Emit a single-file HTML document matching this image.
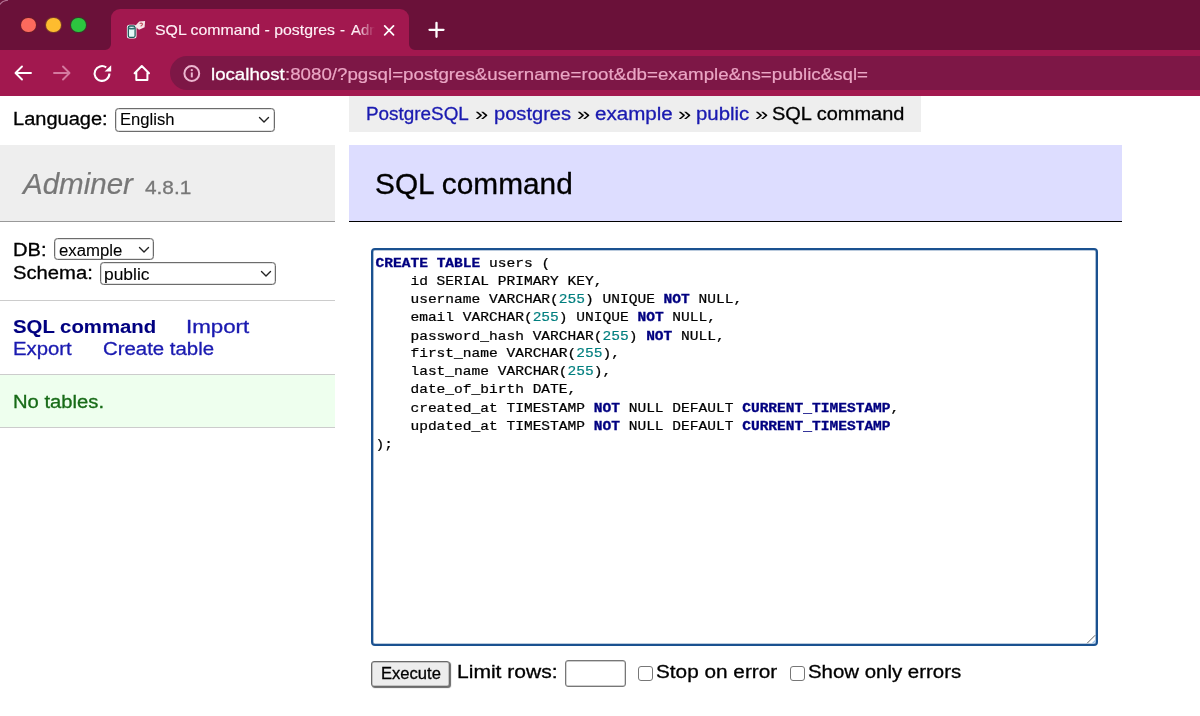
<!DOCTYPE html>
<html><head><meta charset="utf-8"><style>
html,body{margin:0;padding:0;}
body{width:1200px;height:716px;overflow:hidden;position:relative;background:#fff;font-family:"Liberation Sans",sans-serif;}
.abs{position:absolute;}
.t{position:absolute;white-space:pre;line-height:0;transform-origin:0 0;}
#tabstrip{left:0;top:0;width:1200px;height:50px;background:#6a1139;}
#toolbar{left:0;top:50px;width:1200px;height:46px;background:#a2184f;}
#tab{}
.light{position:absolute;width:14.5px;height:14.5px;border-radius:50%;top:17.8px;}
#activetab{left:111px;top:9px;width:298px;height:41px;background:#a2184f;border-radius:9px 9px 0 0;}
#pill{left:170px;top:56px;width:1100px;height:34px;background:#7d1746;border-radius:17px;}
.sel{position:absolute;box-sizing:border-box;border:1px solid #6c6c6c;border-radius:3.5px;background:#fff;box-shadow:inset 0 0 0 0.3px #888;}
pre#code{position:absolute;margin:0;font:14.55px/19.868px "Liberation Mono",monospace;color:#000;white-space:pre;transform:scaleY(0.91);transform-origin:0 0;-webkit-text-stroke:0.25px #000;}
pre#code b{-webkit-text-stroke:0.35px #000080;} pre#code i{-webkit-text-stroke:0.2px #007f7f;}
pre#code b{color:#000080;font-weight:bold;}
pre#code i{color:#007f7f;font-style:normal;}
</style></head><body>
<div id="tabstrip" class="abs"></div>
<svg class="abs" style="left:0;top:0" width="10" height="6"><path d="M0 4.5 Q2 0.8 8 0.2" fill="none" stroke="#b07090" stroke-width="1.2"/></svg>
<div id="toolbar" class="abs"></div>
<div id="activetab" class="abs"></div>
<!-- inverse corners -->
<svg class="abs" style="left:105px;top:44px" width="6" height="6"><path d="M6 0 L6 6 L0 6 A6 6 0 0 0 6 0Z" fill="#a2184f"/></svg>
<svg class="abs" style="left:409px;top:44px" width="6" height="6"><path d="M0 0 L0 6 L6 6 A6 6 0 0 1 0 0Z" fill="#a2184f"/></svg>
<div class="light" style="left:21.2px;background:#fc6a5d;box-shadow:0 0 0 1px #6a1a2a"></div>
<div class="light" style="left:46.2px;background:#fdbc2f;box-shadow:0 0 0 1px #7a3a2a"></div>
<div class="light" style="left:71.2px;background:#2cc53f;box-shadow:0 0 0 1px #3a3a2a"></div>
<!-- favicon -->
<svg class="abs" style="left:125px;top:19px" width="22" height="22" viewBox="0 0 22 22">
 <rect x="1.9" y="5.8" width="9.6" height="13.7" rx="2.5" fill="#fff"/>
 <rect x="3.3" y="7" width="6.8" height="11.3" rx="1.5" fill="#e6f8f8" stroke="#205a5a" stroke-width="1.3"/>
 <path d="M3.4 9 Q6.7 10.6 10 9" fill="none" stroke="#2f7070" stroke-width="1.5"/>
 <path d="M9.9 7.2 L14.2 2.4 L20.1 1.9 L19.6 8.2 L14 10.7 Z" fill="#f8e4e8"/>
 <path d="M14.6 4.6 Q16.5 3.4 17.6 5 Q17 6.5 15.6 7.2" fill="none" stroke="#c05060" stroke-width="1.1"/>
</svg>
<!-- tab title with fade -->
<div class="abs" style="left:150px;top:10px;width:228px;height:40px;overflow:hidden;-webkit-mask-image:linear-gradient(90deg,#000 0,#000 207px,rgba(0,0,0,0) 225px);mask-image:linear-gradient(90deg,#000 0,#000 207px,rgba(0,0,0,0) 225px)">
 <div class="abs" style="left:-150px;top:-10px;width:1200px;height:60px"><div class="t" id="tab" style="left:154.74px;top:20.80px;font:15px 'Liberation Sans';color:#fff0f6;transform:scaleX(1.0568);-webkit-text-stroke:0.15px #fff0f6">SQL command - postgres</div><div class="t" id="tab2" style="left:340.00px;top:20.80px;font:15px 'Liberation Sans';color:#fff0f6;transform:scaleX(1.0000);-webkit-text-stroke:0.15px #fff0f6">-</div><div class="t" id="tab3" style="left:351.00px;top:20.80px;font:15px 'Liberation Sans';color:#fff0f6;transform:scaleX(1.0000);-webkit-text-stroke:0.15px #fff0f6">Adminer</div></div>
</div>
<!-- close x -->
<svg class="abs" style="left:383px;top:24px" width="12" height="12" viewBox="0 0 12 12"><path d="M1.7 1.9 L10.5 10.9 M10.5 1.9 L1.7 10.9" stroke="#fff" stroke-width="1.7" stroke-linecap="round"/></svg>
<!-- plus -->
<svg class="abs" style="left:428px;top:21px" width="17" height="17" viewBox="0 0 17 17"><path d="M8.5 1.8 V15.8 M1.5 8.8 H15.5" stroke="#fff" stroke-width="2.3" stroke-linecap="round"/></svg>
<!-- nav icons -->
<svg class="abs" style="left:12px;top:63px" width="22" height="20" viewBox="0 0 22 20"><path d="M19 10 H4 M10 3.5 L3.5 10 L10 16.5" fill="none" stroke="#fff" stroke-width="1.9" stroke-linecap="round" stroke-linejoin="round"/></svg>
<svg class="abs" style="left:51px;top:63px" width="22" height="20" viewBox="0 0 22 20"><path d="M3 10 H18 M12 3.5 L18.5 10 L12 16.5" fill="none" stroke="#d47aa0" stroke-width="1.9" stroke-linecap="round" stroke-linejoin="round"/></svg>
<svg class="abs" style="left:92px;top:63px" width="22" height="22" viewBox="0 0 22 22"><path d="M17.4 10.5 A7.4 7.4 0 1 1 14.2 4.4" fill="none" stroke="#fff" stroke-width="2.1"/><path d="M12.6 8.6 L19.2 8.6 L19.2 2.2 Z" fill="#fff"/></svg>
<svg class="abs" style="left:131px;top:63px" width="22" height="22" viewBox="0 0 22 22"><path d="M3.6 10.2 L10.8 3 L18 10.2 M5.3 8.8 V17 H16.4 V8.8" fill="none" stroke="#fff" stroke-width="2" stroke-linecap="round" stroke-linejoin="round"/></svg>
<div id="pill" class="abs"></div>
<svg class="abs" style="left:182px;top:64px" width="20" height="20" viewBox="0 0 20 20"><circle cx="9.8" cy="9.5" r="7.4" fill="none" stroke="#ecb6cf" stroke-width="2"/><circle cx="9.8" cy="6.2" r="1.15" fill="#ecb6cf"/><path d="M9.8 8.4 V13.4" stroke="#ecb6cf" stroke-width="2"/></svg>

<!-- content boxes -->
<div class="abs" style="left:0;top:145px;width:335px;height:76px;background:#eee;border-bottom:1px solid #999"></div>
<div class="abs" style="left:0;top:300px;width:335px;height:1px;background:#ccc"></div>
<div class="abs" style="left:0;top:375px;width:335px;height:52px;background:#eeffee;border-top:1px solid #ccc;border-bottom:1px solid #ccc;top:374px"></div>
<div class="abs" style="left:349px;top:96px;width:572px;height:36px;background:#eee"></div>
<div class="abs" style="left:349px;top:145px;width:773px;height:76px;background:#ddf;border-bottom:1px solid #000"></div>
<div class="sel" style="left:114.5px;top:108px;width:160.5px;height:23.6px"></div><svg class="abs" style="left:258px;top:116px" width="12" height="8" viewBox="0 0 12 8"><path d="M1.5 1.5 L6 6 L10.5 1.5" fill="none" stroke="#222" stroke-width="1.4" stroke-linecap="round" stroke-linejoin="round"/></svg>
<div class="sel" style="left:53.75px;top:238.2px;width:100px;height:22.3px"></div><svg class="abs" style="left:138px;top:246px" width="12" height="8" viewBox="0 0 12 8"><path d="M1.5 1.5 L6 6 L10.5 1.5" fill="none" stroke="#222" stroke-width="1.4" stroke-linecap="round" stroke-linejoin="round"/></svg>
<div class="sel" style="left:99.5px;top:262.2px;width:176px;height:23.1px"></div><svg class="abs" style="left:259.5px;top:270px" width="12" height="8" viewBox="0 0 12 8"><path d="M1.5 1.5 L6 6 L10.5 1.5" fill="none" stroke="#222" stroke-width="1.4" stroke-linecap="round" stroke-linejoin="round"/></svg>
<!-- textarea -->
<div class="abs" style="left:371px;top:248px;width:723px;height:394px;border:2px solid #1a5190;border-radius:4px;background:#fff;box-shadow:inset 0 0 0 0.6px rgba(26,81,144,0.6)"></div>
<svg class="abs" style="left:1085px;top:633px" width="12" height="12"><path d="M2.2 10.2 L10.2 2.2" stroke="#666" stroke-width="1"/><path d="M7.5 10.5 L10.5 7.5" stroke="#9ec3ea" stroke-width="1.5"/></svg>
<pre id="code" style="left:375.5px;top:255.0px"><b>CREATE</b> <b>TABLE</b> users (
    id SERIAL PRIMARY KEY,
    username VARCHAR(<i>255</i>) UNIQUE <b>NOT</b> NULL,
    email VARCHAR(<i>255</i>) UNIQUE <b>NOT</b> NULL,
    password_hash VARCHAR(<i>255</i>) <b>NOT</b> NULL,
    first_name VARCHAR(<i>255</i>),
    last_name VARCHAR(<i>255</i>),
    date_of_birth DATE,
    created_at TIMESTAMP <b>NOT</b> NULL DEFAULT <b>CURRENT_TIMESTAMP</b>,
    updated_at TIMESTAMP <b>NOT</b> NULL DEFAULT <b>CURRENT_TIMESTAMP</b>
);</pre>
<!-- footer controls -->
<div class="abs" style="left:371px;top:660.5px;width:77px;height:24.5px;box-sizing:content-box;border:1px solid #6a6a6a;border-radius:3px;background:#ededed;box-shadow:1px 1px 1px #666, inset 0 0 0 0.5px #999"></div>
<div class="abs" style="left:565px;top:660px;width:59px;height:24.5px;border:1px solid #777;border-radius:3px;background:#fff;box-shadow:inset 0 0 0 0.4px #999"></div>
<div class="abs" style="left:637.5px;top:666px;width:13px;height:13px;border:1px solid #777;border-radius:3px;background:#fff"></div>
<div class="abs" style="left:789.5px;top:666px;width:13px;height:13px;border:1px solid #777;border-radius:3px;background:#fff"></div>



<div class="t" id="url1" style="left:211.20px;top:64.60px;font:17px 'Liberation Sans';color:#ffffff;transform:scaleX(1.0985);-webkit-text-stroke:0.3px #ffffff">localhost</div>
<div class="t" id="url2" style="left:285.30px;top:64.60px;font:17px 'Liberation Sans';color:#eaa6c4;transform:scaleX(1.1006);-webkit-text-stroke:0.2px #eaa6c4">:8080/?pgsql=postgres&amp;username=root&amp;db=example&amp;ns=public&amp;sql=</div>
<div class="t" id="lang" style="left:12.64px;top:109.10px;font:18px 'Liberation Sans';color:#000;transform:scaleX(1.1114);-webkit-text-stroke:0.3px #000">Language:</div>
<div class="t" id="eng" style="left:119.96px;top:111.30px;font:16px 'Liberation Sans';color:#000;transform:scaleX(1.0392);-webkit-text-stroke:0.1px #000">English</div>
<div class="t" id="adm" style="left:22.62px;top:168.00px;font:italic 29px 'Liberation Sans';color:#777;transform:scaleX(1.0182);-webkit-text-stroke:0.2px #777">Adminer</div>
<div class="t" id="ver" style="left:145.00px;top:177.00px;font:18.5px 'Liberation Sans';color:#777;transform:scaleX(1.1250);-webkit-text-stroke:0.3px #777">4.8.1</div>
<div class="t" id="db" style="left:12.63px;top:239.50px;font:18px 'Liberation Sans';color:#000;transform:scaleX(1.1161);-webkit-text-stroke:0.3px #000">DB:</div>
<div class="t" id="dbv" style="left:58.95px;top:241.50px;font:16px 'Liberation Sans';color:#000;transform:scaleX(1.0466);-webkit-text-stroke:0.1px #000">example</div>
<div class="t" id="sch" style="left:12.63px;top:263.10px;font:18px 'Liberation Sans';color:#000;transform:scaleX(1.1232);-webkit-text-stroke:0.3px #000">Schema:</div>
<div class="t" id="schv" style="left:104.41px;top:265.50px;font:16px 'Liberation Sans';color:#000;transform:scaleX(1.0875);-webkit-text-stroke:0.1px #000">public</div>
<div class="t" id="sqlc" style="left:12.62px;top:317.20px;font:bold 18px 'Liberation Sans';color:#000080;transform:scaleX(1.1300);-webkit-text-stroke:0.1px #000080">SQL command</div>
<div class="t" id="imp" style="left:185.52px;top:317.20px;font:18px 'Liberation Sans';color:#1a1ab0;transform:scaleX(1.2398);-webkit-text-stroke:0.3px #1a1ab0">Import</div>
<div class="t" id="exp" style="left:12.62px;top:339.10px;font:18px 'Liberation Sans';color:#1a1ab0;transform:scaleX(1.1275);-webkit-text-stroke:0.3px #1a1ab0">Export</div>
<div class="t" id="ct" style="left:102.62px;top:339.10px;font:18px 'Liberation Sans';color:#1a1ab0;transform:scaleX(1.1328);-webkit-text-stroke:0.3px #1a1ab0">Create table</div>
<div class="t" id="nt" style="left:12.63px;top:392.30px;font:18px 'Liberation Sans';color:#176b17;transform:scaleX(1.1234);-webkit-text-stroke:0.3px #176b17">No tables.</div>
<div class="t" id="bc1" style="left:366.45px;top:104.00px;font:18px 'Liberation Sans';color:#1a1ab0;transform:scaleX(1.0485);-webkit-text-stroke:0.3px #1a1ab0">PostgreSQL</div>
<div class="t" id="bcr1" style="left:475.39px;top:104.00px;font:18px 'Liberation Sans';color:#000;transform:scaleX(1.3125);-webkit-text-stroke:0.05px #000">»</div>
<div class="t" id="bc2" style="left:494.18px;top:104.00px;font:18px 'Liberation Sans';color:#1a1ab0;transform:scaleX(1.1162);-webkit-text-stroke:0.3px #1a1ab0">postgres</div>
<div class="t" id="bcr2" style="left:576.89px;top:104.00px;font:18px 'Liberation Sans';color:#000;transform:scaleX(1.3125);-webkit-text-stroke:0.05px #000">»</div>
<div class="t" id="bc3" style="left:594.76px;top:104.00px;font:18px 'Liberation Sans';color:#1a1ab0;transform:scaleX(1.1424);-webkit-text-stroke:0.3px #1a1ab0">example</div>
<div class="t" id="bcr3" style="left:677.99px;top:104.00px;font:18px 'Liberation Sans';color:#000;transform:scaleX(1.3125);-webkit-text-stroke:0.05px #000">»</div>
<div class="t" id="bc4" style="left:695.57px;top:104.00px;font:18px 'Liberation Sans';color:#1a1ab0;transform:scaleX(1.1304);-webkit-text-stroke:0.3px #1a1ab0">public</div>
<div class="t" id="bcr4" style="left:754.59px;top:104.00px;font:18px 'Liberation Sans';color:#000;transform:scaleX(1.3125);-webkit-text-stroke:0.05px #000">»</div>
<div class="t" id="bc5" style="left:771.59px;top:104.00px;font:18px 'Liberation Sans';color:#000;transform:scaleX(1.1094);-webkit-text-stroke:0.3px #000">SQL command</div>
<div class="t" id="h2" style="left:374.71px;top:167.70px;font:28.6px 'Liberation Sans';color:#000;transform:scaleX(1.0428);-webkit-text-stroke:0.3px #000">SQL command</div>
<div class="t" id="exe" style="left:380.96px;top:664.75px;font:16px 'Liberation Sans';color:#000;transform:scaleX(1.0357);-webkit-text-stroke:0.3px #000">Execute</div>
<div class="t" id="lim" style="left:456.83px;top:662.00px;font:18px 'Liberation Sans';color:#000;transform:scaleX(1.1696);-webkit-text-stroke:0.3px #000">Limit rows:</div>
<div class="t" id="soe" style="left:656.45px;top:662.00px;font:18px 'Liberation Sans';color:#000;transform:scaleX(1.1538);-webkit-text-stroke:0.3px #000">Stop on error</div>
<div class="t" id="soe2" style="left:808.47px;top:662.00px;font:18px 'Liberation Sans';color:#000;transform:scaleX(1.1343);-webkit-text-stroke:0.3px #000">Show only errors</div>
</body></html>
